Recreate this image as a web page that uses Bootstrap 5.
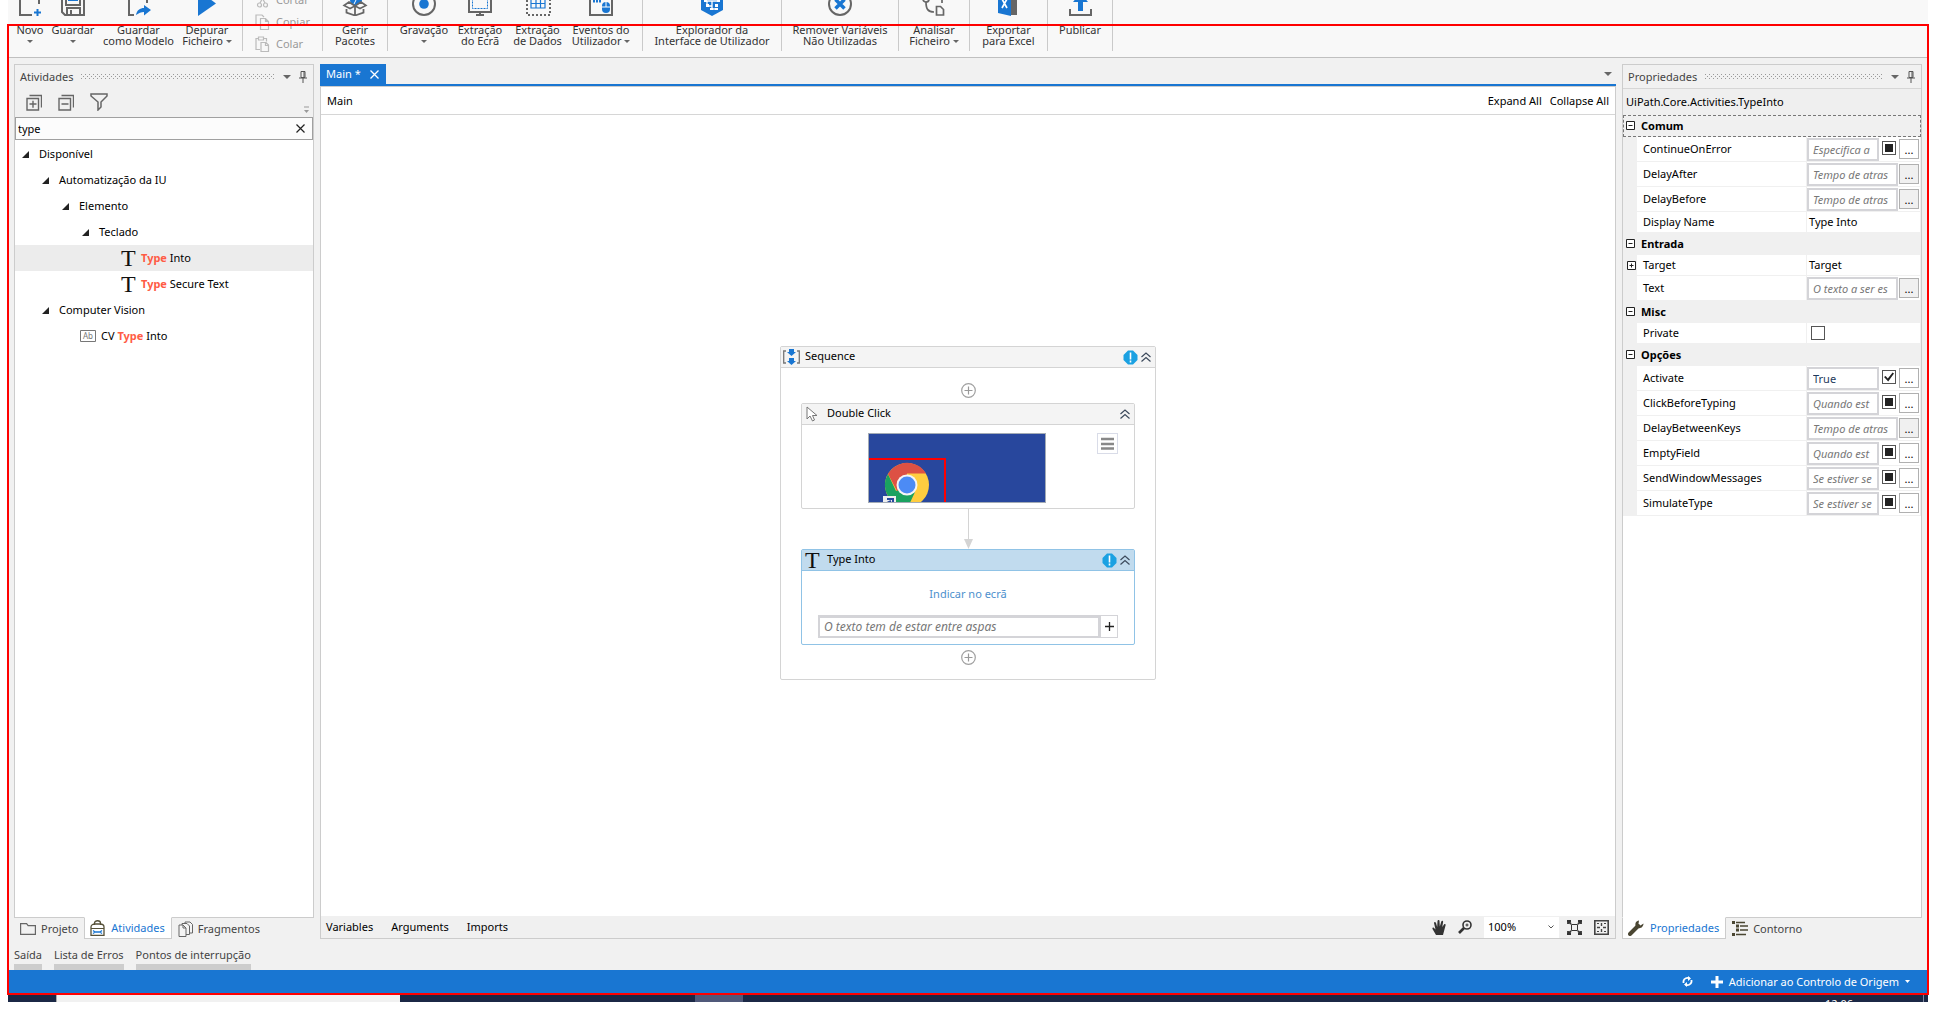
<!DOCTYPE html>
<html lang="pt">
<head>
<meta charset="utf-8">
<meta name="viewport" content="width=device-width, initial-scale=1">
<title>Main - UiPath Studio</title>
<link href="https://cdn.jsdelivr.net/npm/bootstrap@5.3.0/dist/css/bootstrap.min.css" rel="stylesheet">
<style>
:root { --accent: #1976d2; --chrome: #f1f1f1; --line: #cccccc; --ink: #444; }
body { font-family: "Noto Sans", "Open Sans", sans-serif; font-size: 11px; line-height: 16px; color: #000; background: #fff; height: 100vh; padding: 0 8px 17px; overflow: hidden; }
button, input, select { font: inherit; color: inherit; }
button { background: none; border: 0; padding: 0; }
a { color: inherit; text-decoration: none; }
svg { display: block; flex: none; }
.studio { background: var(--chrome); min-height: 0; }
.frame-mark { position: absolute; inset: 24px 7px 24px 7px; border: 2px solid #f00; pointer-events: none; z-index: 5; }

/* ribbon */
.ribbon { height: 58px; background: #f8f8f8; border-bottom: 1px solid #c0c0c0; overflow: hidden; flex: none; }
.ribbon-row { height: 67px; margin-top: -16px; }
.ribbon-group { display: grid; border-right: 1px solid #cacaca; flex: none; }
.g-file { grid-template-columns: 40px 46px 85px 52px; padding: 0 9px 0 2px; }
.g-clip { width: 80px; padding: 5px 0 0 12px; align-content: start; }
.g-rec { grid-template-columns: 60px 52px 63px 64px; padding: 0 9px 0 6px; }
.g-65 { width: 65px; } .g-71 { width: 71px; } .g-78 { width: 78px; } .g-117 { width: 117px; } .g-139 { width: 139px; }
.tool { display: flex; flex-direction: column; align-items: center; line-height: 11px; color: #333; white-space: nowrap; gap: 8px; }
.clip-btn { display: flex; align-items: center; gap: 6px; height: 22px; color: #9a9a9a; }
.caret { display: inline-block; border: 3px solid transparent; border-top-color: #666; border-bottom: 0; vertical-align: 2px; }
.caret-lg { border-width: 4px; border-bottom: 0; }

/* docks */
.work { padding: 6px 6px 0; gap: 6px; min-height: 0; }
.dock { width: 300px; flex: none; min-height: 0; }
.pane { border: 1px solid var(--line); min-height: 0; }
.pane-head { height: 23px; padding: 0 6px 0 5px; color: var(--ink); gap: 8px; }
.grip { height: 5px; background-image: radial-gradient(circle at 0.5px 0.5px, #999 0.6px, transparent 0.7px), radial-gradient(circle at 2.5px 2.5px, #999 0.6px, transparent 0.7px); background-size: 4px 4px; }
.pane-tools { height: 29px; padding: 0 4px 1px 11px; gap: 16px; }
.find { height: 23px; border: 1px solid #a0a0a0; background: #fcfcfc; padding-right: 7px; }
.find input { border: 0; background: none; outline: 0; padding: 0 0 0 2px; min-width: 0; }
.tree { padding-top: 1px; }
.tree-row { height: 26px; display: flex; align-items: center; gap: 10px; padding-left: 7px; }
.lv1 { padding-left: 27px; } .lv2 { padding-left: 47px; } .lv3 { padding-left: 67px; }
.leaf { padding-left: 106px; gap: 6px; }
.leaf-cv { padding-left: 65px; gap: 5px; }
.picked { background: #ececec; }
.hit { color: #ff5c45; font-weight: 700; }
.glyph-t { font-family: "Liberation Serif", serif; font-size: 24px; line-height: 22px; width: 14px; color: #111; }
.dock-tabs { height: 21px; color: var(--ink); }
.dock-tab { display: flex; align-items: center; gap: 5px; padding: 0 6px; height: 21px; white-space: nowrap; }
.dock-tab.on { color: var(--accent); background: #fff; border: 1px solid var(--line); border-top-color: #fff; margin-top: -1px; height: 22px; padding: 0 6px 0 5px; gap: 6px; }

/* document */
.doc-tabs { height: 22px; border-bottom: 2px solid var(--accent); padding-right: 4px; }
.doc-tab { background: var(--accent); color: #fff; height: 20px; padding: 0 7px 0 6px; gap: 9px; }
.doc { border: 1px solid var(--line); background: #fff; min-height: 0; }
.crumbs { height: 28px; padding: 0 6px; border-bottom: 1px solid #d6d6d6; }
.canvas { padding-bottom: 5px; min-height: 0; }
.doc-foot { height: 22px; background: #f0f0f0; padding: 0 6px 0 5px; }
.foot-links { gap: 18px; }
.zoom-pick { width: 75px; height: 21px; border: 0; border-radius: 0; background: #fff; padding: 0 4px; appearance: none; }
.zoom-wrap { position: relative; }
.zoom-wrap svg { position: absolute; right: 5px; top: 8px; pointer-events: none; }

.act { border: 1px solid #d4d4d4; border-radius: 2px; background: #fff; }
.act-head { height: 21px; background: #f4f4f4; border-bottom: 1px solid #d4d4d4; padding: 0 4px 0 2px; }
.inner-act .act-head { padding-left: 3px; }
.act-icon { width: 17px; margin-right: 5px; }
.act-name { line-height: 14px; padding-bottom: 3px; }
.act-flags { gap: 3px; }
.seq { width: 376px; height: 334px; }
.seq-body { padding: 15px 20px; }
.inner-act { width: 334px; }
.dbl { height: 106px; margin-top: 5px; }
.typ { height: 96px; border-color: #90c3e6; margin-bottom: 5px; }
.typ .act-head { background: #c1dbee; border-color: #90c3e6; }
.shot-row { padding: 8px 16px 0 66px; }
.burger { width: 21px; height: 21px; border: 1px solid #d9dce8; display: grid; place-items: center; }
.pointing { color: #4d90cd; padding: 15px 0 13px; text-align: center; }
.expr { border: 2px solid #d4d4d8; background: #fff; color: #1e395b; border-radius: 0; outline: 0; min-width: 0; padding: 0 4px; }
.expr::placeholder { color: #777; font-style: italic; opacity: 1; }
.typ .expr { height: 23px; border-top-width: 3px; padding-bottom: 1px; font-size: 12px; }
.plus-btn { width: 18px; height: 23px; border: 1px solid #d4d4d8; display: grid; place-items: center; }

/* property grid */
.type-name { height: 27px; padding: 0 3px; background: #efefef; border-top: 1px solid #d6d6d6; line-height: 25px; }
.props { background: #fff; }
.prop-cat { height: 22px; background: #f0f0f0; display: flex; align-items: center; gap: 6px; font-weight: 700; padding-left: 3px; }
.prop-cat.now { outline: 1px dashed #777; outline-offset: -1px; }
.prop { display: grid; grid-template-columns: 14px 1fr 113px; height: 21px; background: #f0f0f0; padding-right: 1px; }
.prop.tall { height: 25px; }
.prop > * { margin-bottom: 1px; }
.prop-name { background: #fff; padding-left: 6px; margin-right: 1px; display: flex; align-items: center; }
.prop-val { background: #fff; display: flex; align-items: center; padding-left: 2px; }
.tall .prop-val { padding-left: 0; }
.tall .expr { height: 23px; width: 91px; }
.tall .expr.short { width: 72px; margin-right: 3px; padding-right: 3px; }
.more { width: 20px; height: 20px; border: 1px solid #b0b0b0; background: #f0f0f0; line-height: 20px; margin-left: 1px; flex: none; }
.short ~ .more { background: #fff; margin-left: 3px; }
.tick { appearance: none; width: 14px; height: 14px; border: 1px solid #555; background: #fff; margin: 0; padding: 2px; flex: none; }
.tall .tick { margin-bottom: 2px; }
.tick.third { background: #222 content-box; }
.tick:checked::before { content: ""; display: block; width: 10px; height: 10px; margin: -1px; background: #222; clip-path: polygon(0 50%, 16% 40%, 38% 65%, 86% 5%, 100% 14%, 42% 96%); }
.box-mark { margin-bottom: 2px; }

/* bottom */
.hidden-tabs { height: 31px; padding: 7px 6px 0; gap: 12px; color: var(--ink); flex: none; }
.hidden-tabs a { border-bottom: 6px solid #cdcdcd; line-height: 18px; }
.status { height: 25px; background: var(--accent); color: #fff; padding: 0 18px 2px 0; gap: 18px; flex: none; }
.origin-btn { gap: 6px; }
.taskbar { height: 7px; background: #1b2846; overflow: hidden; flex: none; color: #fff; padding-right: 4px; }
.task-search { width: 344px; background: #f1f1f1; margin-left: 48px; border-left: 1px solid #aaa; }
.task-app { width: 48px; background: #50597a; margin-left: 295px; }
.clock { line-height: 14px; padding: 2px 70px 0 0; border-right: 1px solid #8089a0; }
</style>
<script src="https://cdn.jsdelivr.net/npm/bootstrap@5.3.0/dist/js/bootstrap.bundle.min.js"></script>
</head>
<body class="d-flex flex-column m-0">
<svg width="0" height="0" class="position-absolute" aria-hidden="true">
  <symbol id="pin" viewBox="0 0 8 12"><path d="M2 .5h4v6H2zM5 .5v6M0 7h8M4 7v5" fill="none" stroke="#555"/></symbol>
  <symbol id="open" viewBox="0 0 7 7"><path d="M7 0v7H0z" fill="#222"/></symbol>
  <symbol id="minus-box" viewBox="0 0 9 9"><path d="M.5.5h8v8h-8zM2.500 4.500h4" fill="#fff" stroke="#222"/></symbol>
  <symbol id="plus-box" viewBox="0 0 9 9"><path d="M.5.5h8v8h-8zM2.500 4.500h4M4.500 2.500v4" fill="#fff" stroke="#222"/></symbol>
  <symbol id="add" viewBox="0 0 15 15"><circle cx="7.500" cy="7.500" r="6.800" fill="#fff" stroke="#a0a0a0" stroke-width="1.200"/><path d="M3.500 7.500h8M7.500 3.500v8" stroke="#999" stroke-width="1.200"/></symbol>
  <symbol id="warn" viewBox="0 0 15 15"><path d="M5 .5h5L14.500 5v5L10 14.500H5L.5 10V5z" fill="#1ba1e2"/><path d="M7.500 2.500v7M7.500 10.500v2" stroke="#fff" stroke-width="1.600"/></symbol>
  <symbol id="fold" viewBox="0 0 10 10"><path d="M.5 5L5 1l4.500 4M.5 9.500L5 5.500l4.500 4" fill="none" stroke="#3c4a5c" stroke-width="1.200"/></symbol>
</svg>

<div class="studio d-flex flex-column flex-grow-1">
  <header class="ribbon">
    <div class="ribbon-row d-flex">
      <div class="ribbon-group g-file">
        <button class="tool"><svg width="32" height="32" fill="none"><path d="M6 0v31h12M25 0v20" stroke="#666" stroke-width="2"/><path d="M20 28.500h7M23.500 25v7" stroke="#1976d2" stroke-width="2"/></svg><span>Novo<br><i class="caret"></i></span></button>
        <button class="tool"><svg width="32" height="32" fill="none" stroke="#666" stroke-width="2"><path d="M5 6v22l3 3h19V6z"/><path d="M9 6v15h14V6M10 31v-7h13v7M14 26v5"/><path d="M11 16h10" stroke="#1976d2"/></svg><span>Guardar<br><i class="caret"></i></span></button>
        <button class="tool"><svg width="32" height="32" fill="none"><path d="M6 0v31h5M24 0v19" stroke="#666" stroke-width="2"/><path d="M13 31c1-5 4-7 8-7v-3l7 5-7 5.500V28c-3 0-5 1-8 3z" fill="#1976d2"/></svg><span>Guardar<br>como Modelo</span></button>
        <button class="tool"><svg width="32" height="32"><path d="M7 6v26l18-12.500z" fill="#1976d2"/></svg><span>Depurar<br>Ficheiro <i class="caret"></i></span></button>
      </div>
      <div class="ribbon-group g-clip">
        <button class="clip-btn"><svg width="15" height="16" fill="none" stroke="#bbb" stroke-width="1.200"><path d="M4 0l6 11M11 0L5 11"/><circle cx="4.500" cy="13" r="2"/><circle cx="10.500" cy="13" r="2"/></svg>Cortar</button>
        <button class="clip-btn"><svg width="15" height="16" fill="none" stroke="#bbb" stroke-width="1.200"><path d="M5 11.500H1V1h6l2 2"/><path d="M5.500 4.500h5l3 3v8h-8zM10.500 4.500v3h3"/></svg>Copiar</button>
        <button class="clip-btn"><svg width="15" height="16" fill="none" stroke="#bbb" stroke-width="1.200"><path d="M5 13.500H1v-11h2.500M9 2.500h2.500v3M3.500 1h5v3h-5z"/><path d="M6 6.500h5l2.500 2.500v6.500H6zM10.500 6.500v3h3"/></svg>Colar</button>
      </div>
      <div class="ribbon-group g-65">
        <button class="tool"><svg width="32" height="32" fill="none"><circle cx="17" cy="16" r="6" fill="#1976d2"/><path d="M18 14l-3 6" stroke="#fff"/><path d="M16 22l-6-4-5 3.500 6 3zM16 22l6-4 5 3.500-6 3z" fill="#f8f8f8" stroke="#666" stroke-width="1.600"/><path d="M7.500 25v3.500L16 31.500l8.500-3V25M16 23v8" stroke="#666" stroke-width="1.800"/></svg><span>Gerir<br>Pacotes</span></button>
      </div>
      <div class="ribbon-group g-rec">
        <button class="tool"><svg width="32" height="32"><circle cx="16" cy="20" r="11" fill="none" stroke="#666" stroke-width="2"/><circle cx="16" cy="20" r="4.800" fill="#1976d2"/></svg><span>Gravação<br><i class="caret"></i></span></button>
        <button class="tool"><svg width="32" height="32" fill="none"><path d="M5 8h22v20H5zM16 28v3M12 31h8" stroke="#666" stroke-width="2"/><path d="M8.500 11.500h15v13h-15z" stroke="#1976d2" stroke-dasharray="2 1"/></svg><span>Extração<br>do Ecrã</span></button>
        <button class="tool"><svg width="32" height="32" fill="none"><path d="M5 8v23h23V8" stroke="#666" stroke-width="2" stroke-dasharray="2 2"/><path d="M9 10h14v14H9zM9 15h14M9 19.500h14M14 10v14M18.500 10v14" stroke="#1976d2" stroke-width="1.200"/></svg><span>Extração<br>de Dados</span></button>
        <button class="tool"><svg width="32" height="32" fill="none"><path d="M5 8h22v23H5z" stroke="#666" stroke-width="2"/><path d="M8 17h8" stroke="#1976d2" stroke-width="3" stroke-dasharray="2 1"/><rect x="17" y="18" width="8" height="11" rx="4" fill="#1976d2"/><path d="M17 23h8M21 18v5" stroke="#fff"/></svg><span>Eventos do<br>Utilizador <i class="caret"></i></span></button>
      </div>
      <div class="ribbon-group g-139">
        <button class="tool"><svg width="32" height="32" fill="none"><path d="M5 6h22v20l-11 6-11-6z" fill="#1976d2"/><path d="M9 17h14M11 17v5h5M16 17v8h4" stroke="#fff" stroke-width="1.300"/><path d="M8 15h3v3H8zM21 15h3v3h-3zM19 20h3v3h-3zM10 20h3v3h-3zM14 24h3v2h-3zM19 24h3v2h-3z" fill="#fff"/></svg><span>Explorador da<br>Interface de Utilizador</span></button>
      </div>
      <div class="ribbon-group g-117">
        <button class="tool"><svg width="32" height="32" fill="none"><circle cx="16" cy="20" r="11" stroke="#666" stroke-width="2"/><path d="M11.500 15.500l9 9M20.500 15.500l-9 9" stroke="#1976d2" stroke-width="3.500"/></svg><span>Remover Variáveis<br>Não Utilizadas</span></button>
      </div>
      <div class="ribbon-group g-71">
        <button class="tool"><svg width="32" height="32" fill="none" stroke="#666" stroke-width="1.700"><circle cx="8" cy="15" r="3"/><path d="M8 18c0 7 2 10 8 10M24 10v9"/><path d="M18.500 22.500h4l3 3V31h-7z"/></svg><span>Analisar<br>Ficheiro <i class="caret"></i></span></button>
      </div>
      <div class="ribbon-group g-78">
        <button class="tool"><svg width="32" height="32" fill="none"><path d="M18 8h6v23h-6z" fill="#666"/><path d="M5 7l13-2v27L5 29z" fill="#1976d2"/><path d="M9 15l5 9M14 15l-5 9" stroke="#fff" stroke-width="1.700"/></svg><span>Exportar<br>para Excel</span></button>
      </div>
      <div class="ribbon-group g-65">
        <button class="tool"><svg width="32" height="32" fill="none"><path d="M6 25v6h21v-6" stroke="#666" stroke-width="2"/><path d="M14 27V18H9l7.500-9 7.500 9h-5v9z" fill="#1976d2"/></svg><span>Publicar</span></button>
      </div>
    </div>
  </header>

  <main class="work d-flex flex-grow-1">
    <aside class="dock d-flex flex-column">
      <section class="pane d-flex flex-column flex-grow-1">
        <div class="pane-head d-flex align-items-center"><span>Atividades</span><span class="grip flex-grow-1"></span><i class="caret caret-lg"></i><svg width="8" height="12"><use href="#pin"/></svg></div>
        <div class="pane-tools d-flex align-items-center">
          <button aria-label="Expandir"><svg width="16" height="17" fill="none" stroke="#666" stroke-width="1.400"><path d="M3.500 1.500h12v12M1 4.500h11.500V16H1zM3.500 10h7M7 6.700v7"/></svg></button>
          <button aria-label="Recolher"><svg width="16" height="17" fill="none" stroke="#666" stroke-width="1.400"><path d="M3.500 1.500h12v12M1 4.500h11.500V16H1zM3.500 10h7"/></svg></button>
          <button aria-label="Filtrar"><svg width="18" height="18" fill="none" stroke="#666" stroke-width="1.500"><path d="M1 1h16v2l-6 6v5l-3 3V9L1 3z"/></svg></button>
          <svg width="5" height="8" class="ms-auto mt-3"><path d="M0 1h5" stroke="#999"/><path d="M0 4h5L2.500 7z" fill="#999"/></svg>
        </div>
        <div class="find d-flex align-items-center"><input class="flex-grow-1" type="text" value="type" aria-label="Procurar atividades"><button aria-label="Limpar"><svg width="9" height="9"><path d="M.5.5l8 8M8.500.5l-8 8" stroke="#222" stroke-width="1.200"/></svg></button></div>
        <div class="tree bg-white flex-grow-1 overflow-hidden">
          <div class="tree-row"><svg width="7" height="7"><use href="#open"/></svg>Disponível</div>
          <div class="tree-row lv1"><svg width="7" height="7"><use href="#open"/></svg>Automatização da IU</div>
          <div class="tree-row lv2"><svg width="7" height="7"><use href="#open"/></svg>Elemento</div>
          <div class="tree-row lv3"><svg width="7" height="7"><use href="#open"/></svg>Teclado</div>
          <div class="tree-row leaf picked"><span class="glyph-t">T</span><span><span class="hit">Type</span> Into</span></div>
          <div class="tree-row leaf"><span class="glyph-t">T</span><span><span class="hit">Type</span> Secure Text</span></div>
          <div class="tree-row lv1"><svg width="7" height="7"><use href="#open"/></svg>Computer Vision</div>
          <div class="tree-row leaf-cv"><svg width="16" height="12"><path d="M.5.5h15v11H.5z" fill="#fff" stroke="#777"/><text x="3" y="9" font-size="8" fill="#777">Ab</text></svg><span>CV <span class="hit">Type</span> Into</span></div>
        </div>
      </section>
      <nav class="dock-tabs d-flex">
        <a href="#" class="dock-tab"><svg width="16" height="12" fill="none" stroke="#666" stroke-width="1.200"><path d="M.6 11.400V.6h6l1.500 2h7.300v8.800z"/></svg>Projeto</a>
        <a href="#" class="dock-tab on"><svg width="15" height="16" fill="none"><path d="M4.500 5V3c0-3 6-3 6 0v2M1 15.300h13V7c0-2-2-3-4-3H5C3 4 1 5 1 7z" stroke="#555038" stroke-width="1.300"/><path d="M1 8.500h13" stroke="#555038"/><path d="M4 12h7M3 10.500l2 1.500-2 1.500M12 10.500L10 12l2 1.500" stroke="#1976d2" stroke-width="1.300"/></svg>Atividades</a>
        <a href="#" class="dock-tab"><svg width="15" height="16" fill="#f4f4f4" stroke="#666"><path d="M7 1h5l2.500 2.500V12H7z"/><path d="M4 2.500h5L11.500 5v8.500H4z"/><path d="M1 4h4l3 3v8.500H1zM5 4v3h3"/></svg>Fragmentos</a>
      </nav>
    </aside>

    <section class="d-flex flex-column flex-grow-1 overflow-hidden">
      <div class="doc-tabs d-flex justify-content-between align-items-center flex-shrink-0">
        <a href="#" class="doc-tab d-flex align-items-center">Main *<svg width="9" height="9"><path d="M.5.5l8 8M8.500.5l-8 8" stroke="#fff" stroke-width="1.300"/></svg></a>
        <i class="caret caret-lg"></i>
      </div>
      <div class="doc d-flex flex-column flex-grow-1">
        <div class="crumbs d-flex align-items-center flex-shrink-0"><a href="#">Main</a><a href="#" class="ms-auto me-2">Expand All</a><a href="#">Collapse All</a></div>
        <div class="canvas d-flex flex-grow-1 align-items-center justify-content-center">
          <div class="act seq">
            <div class="act-head d-flex align-items-center"><svg width="17" height="16" class="act-icon" fill="none"><path d="M3 2H.7v12H3M14 2h2.300v12H14" stroke="#777" stroke-width="1.300"/><path d="M6 0h5v3h2L8.500 7 4 3h2zM6 9h5v3h2l-4.500 4L4 12h2z" fill="#1976d2"/></svg><span class="act-name">Sequence</span><span class="act-flags d-flex align-items-center ms-auto"><svg width="15" height="15"><use href="#warn"/></svg><svg width="10" height="10"><use href="#fold"/></svg></span></div>
            <div class="seq-body d-flex flex-column align-items-center">
              <button aria-label="Adicionar"><svg width="15" height="15"><use href="#add"/></svg></button>
              <div class="act inner-act dbl">
                <div class="act-head d-flex align-items-center"><svg width="17" height="17" class="act-icon"><path d="M2 1v12l3-3 2.500 5 2-1L7.500 9.500H12z" fill="#fff" stroke="#777"/></svg><span class="act-name">Double Click</span><span class="ms-auto"><svg width="10" height="10"><use href="#fold"/></svg></span></div>
                <div class="shot-row d-flex justify-content-between align-items-start">
                  <svg width="178" height="70" role="img" aria-label="Elemento alvo"><rect width="178" height="70" fill="#a3abb5"/><svg x="1" y="1" width="176" height="68"><rect width="176" height="68" fill="#28479d"/><path d="M0 25h76v44" fill="none" stroke="#f00" stroke-width="2"/><circle cx="38" cy="51" r="22" fill="#ffcd40"/><path d="M38 51L27 57 19 40A22 22 0 0 0 39 73L46 58z" fill="#1aa260"/><path d="M38 51L28 57 19 40a22 22 0 0 1 38-.5H38z" fill="#dd5144"/><circle cx="38" cy="51" r="10.500" fill="#f5f5f5"/><circle cx="38" cy="51" r="8.500" fill="#4c8bf5"/><path d="M14 62h13v8H14z" fill="#eee"/><path d="M18 65h6v4M18 69l4-2" fill="none" stroke="#28479d" stroke-width="2"/></svg></svg>
                  <button class="burger" aria-label="Opções"><svg width="13" height="13"><path d="M0 2h13M0 7h13M0 11.500h13" stroke="#888" stroke-width="2.500"/></svg></button>
                </div>
              </div>
              <svg width="9" height="40"><path d="M4.500 0v31" stroke="#d4d4d4"/><path d="M0 30h9L4.500 40z" fill="#d4d4d4"/></svg>
              <div class="act inner-act typ">
                <div class="act-head d-flex align-items-center"><span class="glyph-t act-icon">T</span><span class="act-name">Type Into</span><span class="act-flags d-flex align-items-center ms-auto"><svg width="15" height="15"><use href="#warn"/></svg><svg width="10" height="10"><use href="#fold"/></svg></span></div>
                <div class="px-3">
                  <div class="pointing"><a href="#">Indicar no ecrã</a></div>
                  <div class="d-flex"><input class="expr flex-grow-1" type="text" placeholder="O texto tem de estar entre aspas" aria-label="Texto"><button class="plus-btn" aria-label="Inserir"><svg width="9" height="9"><path d="M0 4.500h9M4.500 0v9" stroke="#222" stroke-width="1.300"/></svg></button></div>
                </div>
              </div>
              <button aria-label="Adicionar"><svg width="15" height="15"><use href="#add"/></svg></button>
            </div>
          </div>
        </div>
        <div class="doc-foot d-flex align-items-center flex-shrink-0">
          <div class="foot-links d-flex"><a href="#">Variables</a><a href="#">Arguments</a><a href="#">Imports</a></div>
          <button class="ms-auto" aria-label="Mover"><svg width="14" height="15"><path d="M4 15L.5 9c-.5-1.500 1-2 2-.5l1 1L2 3c0-1.300 1.500-1.500 2 0l1.200 4L5.500 1c.2-1.300 2-1.300 2 0l.3 5.500L9.300 1.500c.5-1.200 2-.8 1.800.5l-.8 5L12 4.500c.8-1 2-.3 1.600.8L11 15z" fill="#333"/></svg></button>
          <button class="mx-2 px-1" aria-label="Ampliar"><svg width="14" height="14" fill="none" stroke="#333"><circle cx="9" cy="5" r="4" stroke-width="1.600"/><path d="M7.500 5h3M9 3.500v3"/><path d="M6 8l-5 5" stroke-width="2.600"/></svg></button>
          <label class="zoom-wrap me-2"><select class="zoom-pick" aria-label="Zoom"><option>100%</option></select><svg width="6" height="4"><path d="M.5.5L3 3 5.500.5" fill="none" stroke="#555"/></svg></label>
          <button class="me-2" aria-label="Ajustar ao ecrã"><svg width="15" height="15" fill="none" stroke="#333"><path d="M4.500 4.500h6v6h-6z"/><path d="M1 1l3 3M14 1l-3 3M1 14l3-3M14 14l-3-3M0 1h4M11 1h4M0 14h4M11 14h4M1 0v4M14 0v4M1 11v4M14 11v4" stroke-width="1.800"/></svg></button>
          <button aria-label="Vista geral" class="ms-1"><svg width="15" height="15" fill="none" stroke="#444"><path d="M.8.8h13.400v13.400H.8z" stroke-width="1.600"/><path d="M7.500 3v3M7.500 9v3M3 7.500h3M9 7.500h3" stroke-width="1.400"/><path d="M3 3.500h2M10 3.500h2M3 11.500h2M10 11.500h2"/></svg></button>
        </div>
      </div>
    </section>

    <aside class="dock d-flex flex-column">
      <section class="pane d-flex flex-column flex-grow-1">
        <div class="pane-head d-flex align-items-center flex-shrink-0"><span>Propriedades</span><span class="grip flex-grow-1"></span><i class="caret caret-lg"></i><svg width="8" height="12"><use href="#pin"/></svg></div>
        <div class="type-name">UiPath.Core.Activities.TypeInto</div>
        <div class="props flex-grow-1 overflow-hidden">
          <div class="prop-cat now"><svg class="box-mark" width="9" height="9"><use href="#minus-box"/></svg>Comum</div>
          <div class="prop tall"><span></span><label class="prop-name" for="p1">ContinueOnError</label><div class="prop-val"><input id="p1" class="expr short" placeholder="Especifica a"><input type="checkbox" class="tick third" aria-label="ContinueOnError"><button class="more">...</button></div></div>
          <div class="prop tall"><span></span><label class="prop-name" for="p2">DelayAfter</label><div class="prop-val"><input id="p2" class="expr" placeholder="Tempo de atras"><button class="more">...</button></div></div>
          <div class="prop tall"><span></span><label class="prop-name" for="p3">DelayBefore</label><div class="prop-val"><input id="p3" class="expr" placeholder="Tempo de atras"><button class="more">...</button></div></div>
          <div class="prop"><span></span><span class="prop-name">Display Name</span><div class="prop-val">Type Into</div></div>
          <div class="prop-cat"><svg class="box-mark" width="9" height="9"><use href="#minus-box"/></svg>Entrada</div>
          <div class="prop"><span class="d-flex align-items-center ps-1"><svg width="9" height="9"><use href="#plus-box"/></svg></span><span class="prop-name">Target</span><div class="prop-val">Target</div></div>
          <div class="prop tall"><span></span><label class="prop-name" for="p4">Text</label><div class="prop-val"><input id="p4" class="expr" placeholder="O texto a ser es"><button class="more">...</button></div></div>
          <div class="prop-cat"><svg class="box-mark" width="9" height="9"><use href="#minus-box"/></svg>Misc</div>
          <div class="prop"><span></span><label class="prop-name" for="p5">Private</label><div class="prop-val ps-1"><input id="p5" type="checkbox" class="tick"></div></div>
          <div class="prop-cat"><svg class="box-mark" width="9" height="9"><use href="#minus-box"/></svg>Opções</div>
          <div class="prop tall"><span></span><label class="prop-name" for="p6">Activate</label><div class="prop-val"><input id="p6" class="expr short" value="True"><input type="checkbox" class="tick" checked aria-label="Activate"><button class="more">...</button></div></div>
          <div class="prop tall"><span></span><label class="prop-name" for="p7">ClickBeforeTyping</label><div class="prop-val"><input id="p7" class="expr short" placeholder="Quando est"><input type="checkbox" class="tick third" aria-label="ClickBeforeTyping"><button class="more">...</button></div></div>
          <div class="prop tall"><span></span><label class="prop-name" for="p8">DelayBetweenKeys</label><div class="prop-val"><input id="p8" class="expr" placeholder="Tempo de atras"><button class="more">...</button></div></div>
          <div class="prop tall"><span></span><label class="prop-name" for="p9">EmptyField</label><div class="prop-val"><input id="p9" class="expr short" placeholder="Quando est"><input type="checkbox" class="tick third" aria-label="EmptyField"><button class="more">...</button></div></div>
          <div class="prop tall"><span></span><label class="prop-name" for="p10">SendWindowMessages</label><div class="prop-val"><input id="p10" class="expr short" placeholder="Se estiver se"><input type="checkbox" class="tick third" aria-label="SendWindowMessages"><button class="more">...</button></div></div>
          <div class="prop tall"><span></span><label class="prop-name" for="p11">SimulateType</label><div class="prop-val"><input id="p11" class="expr short" placeholder="Se estiver se"><input type="checkbox" class="tick third" aria-label="SimulateType"><button class="more">...</button></div></div>
        </div>
      </section>
      <nav class="dock-tabs d-flex">
        <a href="#" class="dock-tab on"><svg width="16" height="16"><path d="M2 14L10 6" stroke="#4a4632" stroke-width="4" stroke-linecap="round"/><path d="M15.500 3.500l-3 2-2-1.500.5-3.500C8 1 6.500 3.500 8 6.500l2 1.500c3 1 5.500-1.500 5.500-4.500z" fill="#4a4632"/></svg>Propriedades</a>
        <a href="#" class="dock-tab"><svg width="16" height="15" fill="none" stroke="#4a4632"><path d="M0 1.500h3M4 5h3M4 9h3M0 13.500h3" stroke-width="3"/><path d="M4 1.500h9M8 5h8M8 9h8M4 13.500h10" stroke-width="1.300"/></svg>Contorno</a>
      </nav>
    </aside>
  </main>

  <nav class="hidden-tabs d-flex"><a href="#">Saída</a><a href="#">Lista de Erros</a><a href="#">Pontos de interrupção</a></nav>
  <footer class="status d-flex align-items-center justify-content-end">
    <button aria-label="Atualizar"><svg width="11" height="11" fill="none" stroke="#fff" stroke-width="1.800"><path d="M1.500 7V5a4 4 0 0 1 6-2.500M9.500 4v2a4 4 0 0 1-6 2.500"/><path d="M6 0l3 2.500L6 5zM5 6L2 8.500 5 11z" fill="#fff" stroke="none"/></svg></button>
    <button class="origin-btn d-flex align-items-center"><svg width="12" height="12"><path d="M0 6h12M6 0v12" stroke="#fff" stroke-width="3"/></svg>Adicionar ao Controlo de Origem<svg width="5" height="3"><path d="M0 0h5L2.500 3z" fill="#fff"/></svg></button>
  </footer>
  <div class="taskbar d-flex"><div class="task-search"></div><div class="task-app"></div><div class="clock ms-auto">12:06</div></div>
</div>
<div class="frame-mark"></div>
</body>
</html>
